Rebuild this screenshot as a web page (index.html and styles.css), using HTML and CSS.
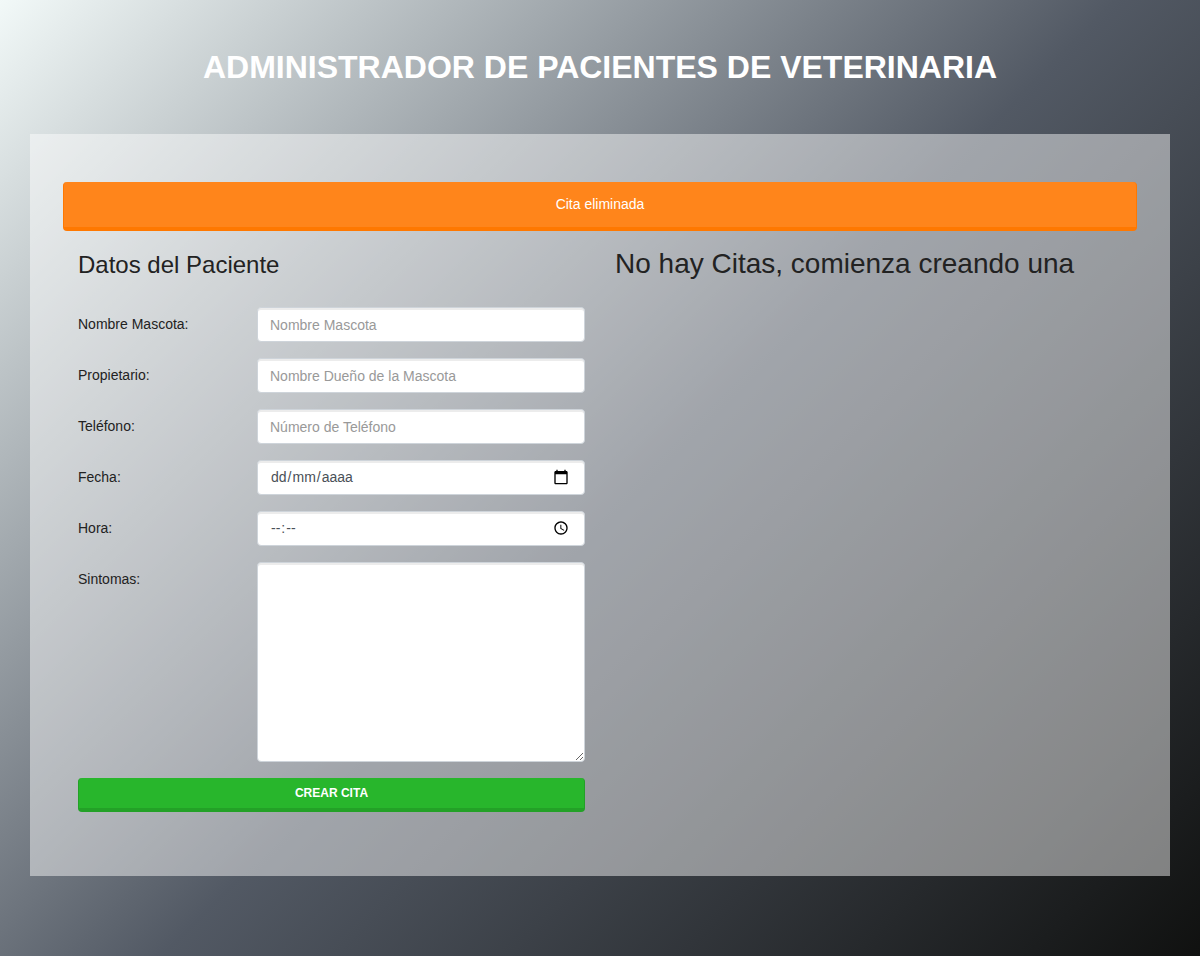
FILE: index.html
```html
<!DOCTYPE html>
<html lang="es">
<head>
<meta charset="utf-8">
<title>Administrador de Pacientes de Veterinaria</title>
<link rel="stylesheet" href="styles.css">
</head>
<body>
<h1 class="title">Administrador de Pacientes de Veterinaria</h1>
<main class="panel">
  <div class="alert">Cita eliminada</div>
  <div class="columns">
    <form class="column">
      <h2 class="legend">Datos del Paciente</h2>
      <div class="group"><label class="label" for="mascota">Nombre Mascota:</label><input class="control" id="mascota" type="text" placeholder="Nombre Mascota"></div>
      <div class="group"><label class="label" for="propietario">Propietario:</label><input class="control" id="propietario" type="text" placeholder="Nombre Dueño de la Mascota"></div>
      <div class="group"><label class="label" for="telefono">Teléfono:</label><input class="control" id="telefono" type="text" placeholder="Número de Teléfono"></div>
      <div class="group"><span class="label">Fecha:</span>
        <div class="control picker"><span class="parts"><span class="part">dd</span>/<span class="part">mm</span>/<span class="part">aaaa</span></span>
          <svg class="icon" width="20" height="20" viewBox="0 0 24 24"><path d="M20 3h-1V1h-2v2H7V1H5v2H4c-1.100 0-2 .9-2 2v16c0 1.100.9 2 2 2h16c1.100 0 2-.9 2-2V5c0-1.100-.9-2-2-2zm0 18H4V8h16v13z"/></svg></div></div>
      <div class="group"><span class="label">Hora:</span>
        <div class="control picker"><span class="parts"><span class="part">--</span>:<span class="part">--</span></span>
          <svg class="icon" width="20" height="20" viewBox="0 0 24 24"><path d="M11.990 2C6.470 2 2 6.480 2 12s4.470 10 9.990 10C17.520 22 22 17.520 22 12S17.520 2 11.990 2zM12 20c-4.420 0-8-3.580-8-8s3.580-8 8-8 8 3.580 8 8-3.580 8-8 8zM12.500 7H11v6l5.250 3.150.75-1.230-4.500-2.670z"/></svg></div></div>
      <div class="group"><label class="label" for="sintomas">Sintomas:</label><textarea class="control area" id="sintomas"></textarea></div>
      <button class="submit" type="button">Crear Cita</button>
    </form>
    <section class="column"><h2 class="empty">No hay Citas, comienza creando una</h2></section>
  </div>
</main>
</body>
</html>
```
FILE: styles.css
```css
* { box-sizing: border-box; }

body {
  margin: 0;
  padding-top: 48px;
  height: 956px;
  overflow: hidden;
  background: linear-gradient(135deg, #f2f9f8 0%, #525964 51.8%, #101110 100%) no-repeat;
  font: 14px/1.5 "Liberation Sans", Arial, sans-serif;
  color: #222;
}

.title {
  margin: 0 0 48px;
  font-size: 32px;
  line-height: 38px;
  text-align: center;
  text-transform: uppercase;
  color: #fff;
}

.panel {
  width: 1140px;
  height: 742px;
  margin: 0 auto;
  padding: 48px 33px;
  background: rgba(255, 255, 255, .46);
}

.alert {
  padding: 12px 20px;
  border: solid #ff7800;
  border-width: 0 1px 4px;
  border-radius: 4px;
  background: #ff851b;
  text-align: center;
  color: #fff;
}

.columns {
  display: grid;
  grid-template-columns: 507px 507px;
  gap: 30px;
  padding: 16px 15px 0;
}

.legend {
  margin: 0 0 24px;
  font-size: 24px;
  font-weight: 400;
  line-height: 36px;
}

.empty {
  margin: 0;
  font-size: 28px;
  font-weight: 400;
  line-height: 33.6px;
}

.group {
  display: grid;
  grid-template-columns: 149px 328px;
  gap: 30px;
  margin-bottom: 16px;
}

.label { padding-top: 7px; }

.control {
  width: 100%;
  height: 35px;
  padding: 6px 12px;
  border: 1px solid #ced4da;
  border-radius: 4px;
  outline: 0;
  background: #fff;
  box-shadow: inset 0 2px 0 rgba(0, 0, 0, .075);
  font: inherit;
  color: #495057;
}

.control::placeholder { color: #999; opacity: 1; }

.picker {
  display: flex;
  align-items: center;
  justify-content: space-between;
}

.part { padding: 0 1px; }

.icon {
  width: 16px;
  height: 16px;
  margin: 0 3px 1px 0;
  fill: #000;
}

.area { display: block; height: 200px; resize: vertical; }

.submit {
  display: block;
  width: 100%;
  height: 34px;
  padding: 6px 12px;
  border: solid #23a127;
  border-width: 0 1px 4px;
  border-radius: 4px;
  background: #28b62c;
  font: bold 12px/18px "Liberation Sans", Arial, sans-serif;
  text-transform: uppercase;
  color: #fff;
}
```
